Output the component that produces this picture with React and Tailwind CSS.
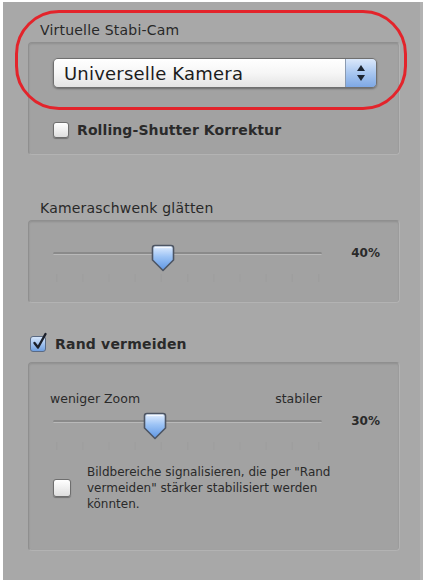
import React from "react";

const font = { fontFamily: '"DejaVu Sans", "Liberation Sans", sans-serif' };

function Thumb({ x }) {
  return (
    <svg
      className="absolute top-0"
      style={{ left: x - 12 }}
      width="24"
      height="28"
      viewBox="0 0 24 28"
    >
      <defs>
        <linearGradient id={"tg" + x} x1="0" y1="0" x2="0" y2="1">
          <stop offset="0" stopColor="#e4efff" />
          <stop offset="0.45" stopColor="#9cc3f5" />
          <stop offset="1" stopColor="#5d95e3" />
        </linearGradient>
      </defs>
      <path
        d="M4 1.5 H20 Q22.5 1.5 22.5 4 V16 L12 26.5 L1.5 16 V4 Q1.5 1.5 4 1.5 Z"
        fill={"url(#tg" + x + ")"}
        stroke="#4d5563"
        strokeWidth="1.6"
        strokeLinejoin="round"
      />
      <path d="M4 3.5 H20" stroke="#ffffff" strokeOpacity="0.7" strokeWidth="1.2" />
    </svg>
  );
}

function Slider({ pos, value }) {
  const ticks = [];
  for (let i = 0; i <= 10; i++) ticks.push(3 + i * 26.2);
  return (
    <div className="flex items-start">
      <div className="relative w-[269px] h-[40px]">
        <div className="absolute left-0 right-0 top-[8px] h-[3px] rounded-full bg-[#8a8a8a] border-b border-[#b9b9b9]" />
        <svg className="absolute left-0 top-[30px]" width="270" height="10">
          {ticks.map((t, i) => (
            <rect key={i} x={t} y="0" width="1.2" height="8" fill="#999999" opacity="0.35" />
          ))}
        </svg>
        <Thumb x={pos} />
      </div>
      <div className="ml-auto text-[12px] leading-[18px] font-bold text-[#2a2a2a]">
        {value}
      </div>
    </div>
  );
}

function Box({ className, children }) {
  return (
    <div
      className={
        "ml-[25px] w-[372px] rounded-[4px] bg-[#a2a2a2] border border-[#8f8f8f] border-b-[#b3b3b3] border-r-[#b3b3b3] shadow-[inset_0_1px_2px_rgba(0,0,0,0.12)] " +
        className
      }
    >
      {children}
    </div>
  );
}

function EmptyCheck({ size = 16 }) {
  return (
    <div
      className="shrink-0 rounded-[3px] border border-[#6e6e6e] bg-gradient-to-b from-[#ffffff] to-[#dedede] shadow-[0_1px_1px_rgba(0,0,0,0.3)]"
      style={{ width: size, height: size }}
    />
  );
}

export default function App() {
  return (
    <div
      className="relative w-[423px] h-[584px] bg-white pl-[3px] pt-[2px] pb-[4px] overflow-hidden"
      style={font}
    >
      <div className="h-full bg-[#a8a8a8] pt-[19px] text-[#282828] border-r-[3px] border-r-[#b2b2b2]">
        {/* Group 1 */}
        <div className="ml-[37px] text-[14px] leading-[18px] mb-[3px] tracking-[0.2px]">Virtuelle Stabi-Cam</div>
        <Box className="h-[113px] pl-[24px] pt-[15px]">
          <div className="flex w-[324px] h-[30px] rounded-[5px] border border-[#6f6f6f] shadow-[0_1px_2px_rgba(0,0,0,0.35)] overflow-hidden">
            <div className="flex-1 flex items-center pl-[10px] bg-gradient-to-b from-[#ffffff] via-[#f6f6f6] to-[#e4e4e4] text-[18px] text-[#1c1c1c] tracking-[0.2px]">
              Universelle Kamera
            </div>
            <div className="w-[31px] flex flex-col items-center justify-center gap-[4px] border-l border-[#8a9ab0] bg-gradient-to-b from-[#dbe8fa] via-[#a9c7f0] to-[#7ea8e4]">
              <svg width="8" height="6" viewBox="0 0 8 6">
                <path d="M4 0 L8 6 H0 Z" fill="#1c2430" />
              </svg>
              <svg width="8" height="6" viewBox="0 0 8 6">
                <path d="M0 0 H8 L4 6 Z" fill="#1c2430" />
              </svg>
            </div>
          </div>
          <div className="flex items-center gap-[8px] mt-[33px] h-[18px]">
            <EmptyCheck size={16} />
            <span className="text-[14px] font-bold text-[#2a2a2a] tracking-[0.1px]">Rolling-Shutter Korrektur</span>
          </div>
        </Box>

        {/* Group 2 */}
        <div className="ml-[37px] mt-[44px] text-[14px] leading-[18px] mb-[3px] tracking-[0.2px]">Kameraschwenk glätten</div>
        <Box className="h-[83px] pl-[24px] pr-[19px] pt-[23px]">
          <Slider pos={110} value="40%" />
        </Box>

        {/* Group 3 */}
        <div className="flex items-center gap-[9px] ml-[27px] mt-[32px] h-[18px] mb-[9px]">
          <div className="w-[16px] h-[16px] shrink-0 rounded-[3px] border border-[#5a6a84] bg-gradient-to-b from-[#d6e6fb] to-[#6f9fe0] relative">
            <svg className="absolute -top-[5px] left-[1px]" width="16" height="19" viewBox="0 0 16 19">
              <path d="M2.5 11 L6 15.5 L13.5 2" fill="none" stroke="#1a1f2a" strokeWidth="2.4" strokeLinecap="round" strokeLinejoin="round" />
            </svg>
          </div>
          <span className="text-[14px] font-bold text-[#2a2a2a] tracking-[0.2px]">Rand vermeiden</span>
        </div>
        <Box className="h-[189px] pl-[24px] pr-[19px] pt-[27px]">
          <div className="flex w-[272px] text-[12.5px] leading-[18px] text-[#2a2a2a] -ml-[3px]">
            <span>weniger Zoom</span>
            <span className="ml-auto">stabiler</span>
          </div>
          <div className="mt-[4px]">
            <Slider pos={102} value="30%" />
          </div>
          <div className="flex items-center gap-[16px] mt-[12px]">
            <EmptyCheck size={18} />
            <p className="text-[12px] leading-[16px] text-[#2a2a2a] w-[280px]">
              Bildbereiche signalisieren, die per "Rand vermeiden" stärker stabilisiert werden könnten.
            </p>
          </div>
        </Box>
      </div>

      {/* red annotation oval */}
      <div className="absolute left-[15px] top-[10px] w-[392px] h-[100px] rounded-[44px] border-[3px] border-[#e3242b] pointer-events-none" />
    </div>
  );
}
